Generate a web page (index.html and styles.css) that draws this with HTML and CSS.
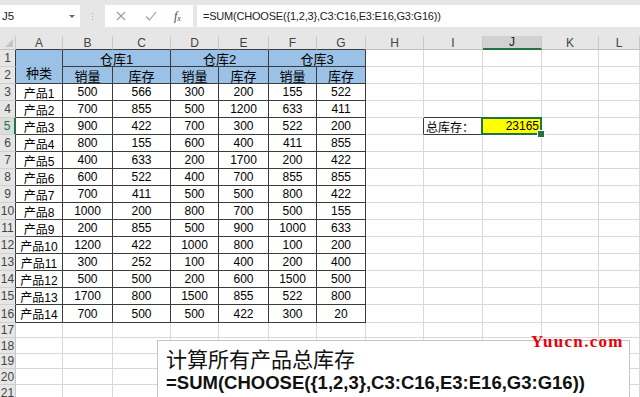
FILE: index.html
```html
<!DOCTYPE html>
<html lang="zh">
<head>
<meta charset="utf-8">
<title>SUM CHOOSE</title>
<link rel="stylesheet" href="styles.css">
</head>
<body>
<div class="app">
  <div class="topbar">
    <div class="namebox"><span>J5</span><span class="caret"></span></div>
    <div class="dots"><i></i><i></i><i></i></div>
    <div class="btns">
      <svg class="ic" width="12" height="12" viewBox="0 0 12 12"><path d="M2 2L10 10M10 2L2 10" stroke="#9a9a9a" stroke-width="1.1" fill="none"/></svg>
      <svg class="ic" width="14" height="12" viewBox="0 0 14 12"><path d="M2 6.5L5.5 10L12 2" stroke="#9a9a9a" stroke-width="1.1" fill="none"/></svg>
      <span class="fx">f<sub>x</sub></span>
    </div>
    <div class="formula">=SUM(CHOOSE({1,2,3},C3:C16,E3:E16,G3:G16))</div>
  </div>

  <div class="sheet">
    <div class="corner"><span class="tri"></span></div>
    <div class="ch tb">A</div><div class="ch tb">B</div><div class="ch tb">C</div><div class="ch tb">D</div><div class="ch tb">E</div><div class="ch tb">F</div><div class="ch tb">G</div><div class="ch">H</div><div class="ch">I</div><div class="ch act">J</div><div class="ch">K</div><div class="ch">L</div>

    <div class="rh tb">1</div><div class="c t h kind">种类</div><div class="c t h span2">仓库1</div><div class="c t h span2">仓库2</div><div class="c t h span2">仓库3</div><div class="c"></div><div class="c"></div><div class="c"></div><div class="c"></div><div class="c"></div>

    <div class="rh tb">2</div><div class="c t h">销量</div><div class="c t h">库存</div><div class="c t h">销量</div><div class="c t h">库存</div><div class="c t h">销量</div><div class="c t h">库存</div><div class="c"></div><div class="c"></div><div class="c"></div><div class="c"></div><div class="c"></div>

    <div class="rh tb">3</div><div class="c t">产品1</div><div class="c t">500</div><div class="c t">566</div><div class="c t">300</div><div class="c t">200</div><div class="c t">155</div><div class="c t">522</div><div class="c"></div><div class="c"></div><div class="c"></div><div class="c"></div><div class="c"></div>

    <div class="rh tb">4</div><div class="c t">产品2</div><div class="c t">700</div><div class="c t">855</div><div class="c t">500</div><div class="c t">1200</div><div class="c t">633</div><div class="c t">411</div><div class="c"></div><div class="c above"></div><div class="c"></div><div class="c"></div><div class="c"></div>

    <div class="rh tb act">5</div><div class="c t">产品3</div><div class="c t">900</div><div class="c t">422</div><div class="c t">700</div><div class="c t">300</div><div class="c t">522</div><div class="c t">200</div><div class="c leftof"></div><div class="c label">总库存：</div><div class="c sel">23165</div><div class="c"></div><div class="c"></div>

    <div class="rh tb">6</div><div class="c t">产品4</div><div class="c t">800</div><div class="c t">155</div><div class="c t">600</div><div class="c t">400</div><div class="c t">411</div><div class="c t">855</div><div class="c"></div><div class="c"></div><div class="c"></div><div class="c"></div><div class="c"></div>

    <div class="rh tb">7</div><div class="c t">产品5</div><div class="c t">400</div><div class="c t">633</div><div class="c t">200</div><div class="c t">1700</div><div class="c t">200</div><div class="c t">422</div><div class="c"></div><div class="c"></div><div class="c"></div><div class="c"></div><div class="c"></div>

    <div class="rh tb">8</div><div class="c t">产品6</div><div class="c t">600</div><div class="c t">522</div><div class="c t">400</div><div class="c t">700</div><div class="c t">855</div><div class="c t">855</div><div class="c"></div><div class="c"></div><div class="c"></div><div class="c"></div><div class="c"></div>

    <div class="rh tb">9</div><div class="c t">产品7</div><div class="c t">700</div><div class="c t">411</div><div class="c t">500</div><div class="c t">500</div><div class="c t">800</div><div class="c t">422</div><div class="c"></div><div class="c"></div><div class="c"></div><div class="c"></div><div class="c"></div>

    <div class="rh tb">10</div><div class="c t">产品8</div><div class="c t">1000</div><div class="c t">200</div><div class="c t">800</div><div class="c t">700</div><div class="c t">500</div><div class="c t">155</div><div class="c"></div><div class="c"></div><div class="c"></div><div class="c"></div><div class="c"></div>

    <div class="rh tb">11</div><div class="c t">产品9</div><div class="c t">200</div><div class="c t">855</div><div class="c t">500</div><div class="c t">900</div><div class="c t">1000</div><div class="c t">633</div><div class="c"></div><div class="c"></div><div class="c"></div><div class="c"></div><div class="c"></div>

    <div class="rh tb">12</div><div class="c t">产品10</div><div class="c t">1200</div><div class="c t">422</div><div class="c t">1000</div><div class="c t">800</div><div class="c t">100</div><div class="c t">200</div><div class="c"></div><div class="c"></div><div class="c"></div><div class="c"></div><div class="c"></div>

    <div class="rh tb">13</div><div class="c t">产品11</div><div class="c t">300</div><div class="c t">252</div><div class="c t">100</div><div class="c t">400</div><div class="c t">200</div><div class="c t">400</div><div class="c"></div><div class="c"></div><div class="c"></div><div class="c"></div><div class="c"></div>

    <div class="rh tb">14</div><div class="c t">产品12</div><div class="c t">500</div><div class="c t">500</div><div class="c t">200</div><div class="c t">600</div><div class="c t">1500</div><div class="c t">500</div><div class="c"></div><div class="c"></div><div class="c"></div><div class="c"></div><div class="c"></div>

    <div class="rh tb">15</div><div class="c t">产品13</div><div class="c t">1700</div><div class="c t">800</div><div class="c t">1500</div><div class="c t">855</div><div class="c t">522</div><div class="c t">800</div><div class="c"></div><div class="c"></div><div class="c"></div><div class="c"></div><div class="c"></div>

    <div class="rh tb">16</div><div class="c t">产品14</div><div class="c t">700</div><div class="c t">500</div><div class="c t">500</div><div class="c t">422</div><div class="c t">300</div><div class="c t">20</div><div class="c"></div><div class="c"></div><div class="c"></div><div class="c"></div><div class="c"></div>

    <div class="rh">17</div><div class="c"></div><div class="c"></div><div class="c"></div><div class="c"></div><div class="c"></div><div class="c"></div><div class="c"></div><div class="c"></div><div class="c"></div><div class="c"></div><div class="c"></div><div class="c"></div>
    <div class="rh">18</div><div class="c"></div><div class="c"></div><div class="c"></div><div class="c"></div><div class="c"></div><div class="c"></div><div class="c"></div><div class="c"></div><div class="c"></div><div class="c"></div><div class="c"></div><div class="c"></div>
    <div class="rh">19</div><div class="c"></div><div class="c"></div><div class="c"></div><div class="c"></div><div class="c"></div><div class="c"></div><div class="c"></div><div class="c"></div><div class="c"></div><div class="c"></div><div class="c"></div><div class="c"></div>
    <div class="rh">20</div><div class="c"></div><div class="c"></div><div class="c"></div><div class="c"></div><div class="c"></div><div class="c"></div><div class="c"></div><div class="c"></div><div class="c"></div><div class="c"></div><div class="c"></div><div class="c"></div>
    <div class="rh">21</div><div class="c"></div><div class="c"></div><div class="c"></div><div class="c"></div><div class="c"></div><div class="c"></div><div class="c"></div><div class="c"></div><div class="c"></div><div class="c"></div><div class="c"></div><div class="c"></div>
  </div>

  <div class="note">
    <div class="note-title">计算所有产品总库存</div>
    <div class="note-formula">=SUM(CHOOSE({1,2,3},C3:C16,E3:E16,G3:G16))</div>
  </div>
  <div class="mark">Yuucn.com</div>
</div>
</body>
</html>
```

FILE: styles.css
```css
* { box-sizing: border-box; }
html, body { margin: 0; padding: 0; background: #fff; }
body {
  font-family: "Liberation Sans", "Noto Sans CJK SC", sans-serif;
  color: #000;
  width: 640px;
  height: 397px;
  overflow: hidden;
}
.app { position: relative; width: 640px; height: 397px; overflow: hidden; }

/* formula bar */
.topbar {
  height: 36px;
  background: #e6e6e6;
  display: flex;
  align-items: flex-start;
  padding-top: 5px;
}
.namebox {
  width: 80px;
  height: 22px;
  background: #fff;
  display: flex;
  align-items: center;
  justify-content: space-between;
  padding: 0 5px 0 2px;
  font-size: 11.5px;
  color: #222;
}
.caret {
  width: 0; height: 0;
  border-left: 3px solid transparent;
  border-right: 3px solid transparent;
  border-top: 3px solid #666;
}
.dots {
  width: 25px;
  height: 22px;
  display: flex;
  flex-direction: column;
  align-items: center;
  justify-content: center;
  gap: 2px;
}
.dots i { width: 1px; height: 1px; background: #aaa; display: block; }
.btns {
  width: 88px;
  height: 22px;
  background: #fff;
  display: flex;
  align-items: center;
  padding-left: 10px;
  gap: 0;
}
.btns .ic { display: block; }
.btns .ic:first-child { margin-right: 17px; }
.btns .ic:nth-child(2) { margin-right: 16px; }
.fx {
  font-family: "Liberation Serif", serif;
  font-style: italic;
  font-size: 12px;
  color: #444;
}
.fx sub { font-size: 8px; vertical-align: -1px; }
.formula {
  margin-left: 4px;
  flex: 1;
  height: 22px;
  background: #fff;
  font-size: 11px;
  letter-spacing: -0.2px;
  color: #222;
  display: flex;
  align-items: center;
  padding-left: 6px;
}

/* grid */
.sheet {
  display: grid;
  grid-template-columns: 16px 47px 50px 58px 48px 50px 48px 49px 58px 59px 59px 57px 41px;
  grid-template-rows: 14px repeat(15, 17px) 18px 15px 16px 15px 16px 16px;
  font-size: 12px;
}
.corner {
  background: #e6e6e6;
  border-right: 1px solid #c8c8c8;
  border-bottom: 1px solid #bdbdbd;
  position: relative;
}
.tri {
  position: absolute;
  right: 2px; bottom: 2px;
  width: 0; height: 0;
  border-left: 8px solid transparent;
  border-bottom: 8px solid #c4c4c4;
}
.ch {
  background: #e6e6e6;
  border-right: 1px solid #c8c8c8;
  border-bottom: 1px solid #bdbdbd;
  color: #444;
  display: flex;
  align-items: center;
  justify-content: center;
  font-size: 12px;
}
.ch.tb { border-bottom-color: #3c3c3c; }
.ch.act { background: #d2d2d2; border-bottom: 2px solid #217346; color: #222; }
.rh {
  background: #e6e6e6;
  border-right: 1px solid #c8c8c8;
  border-bottom: 1px solid #d0d0d0;
  color: #444;
  display: flex;
  align-items: center;
  justify-content: center;
  font-size: 12px;
}
.rh.tb { border-right-color: #3c3c3c; }
.rh.act { border-right: 2px solid #217346; color: #217346; background: #dcdcdc; }
.c {
  border-right: 1px solid #d9d9d9;
  border-bottom: 1px solid #d9d9d9;
  display: flex;
  align-items: center;
  justify-content: center;
  white-space: nowrap;
  overflow: hidden;
}
.t { border-right-color: #3c3c3c; border-bottom-color: #3c3c3c; }
.h { background: #9bc2e6; font-size: 13px; }
.span2 { grid-column: span 2; }
.kind { grid-row: span 2; align-items: flex-end; padding-bottom: 1px; }
.above { border-bottom-color: #3c3c3c; }
.leftof { border-right-color: #3c3c3c; }
.label {
  border-right-color: #3c3c3c;
  border-bottom-color: #3c3c3c;
  justify-content: flex-start;
  padding-left: 2px;
  font-size: 12px;
}
.sel {
  position: relative;
  z-index: 2;
  overflow: visible;
  background: #ffff00;
  justify-content: flex-end;
  padding-right: 2px;
  font-size: 12px;
}
.sel::after {
  content: "";
  position: absolute;
  top: -1px; left: -2px; right: -1px; bottom: -1px;
  border: 2px solid #217346;
}
.sel::before {
  content: "";
  position: absolute;
  right: -4px; bottom: -4px;
  width: 6px; height: 6px;
  background: #217346;
  border: 1px solid #fff;
  z-index: 3;
}

/* overlay note */
.note {
  position: absolute;
  left: 157px;
  top: 340px;
  width: 473px;
  height: 70px;
  background: #fff;
  border: 1px solid #c4c4c4;
  padding: 4px 0 0 8px;
}
.note-title {
  font-family: "Noto Sans CJK SC", sans-serif;
  font-size: 21px;
  line-height: 26px;
  color: #111;
}
.note-formula {
  font-family: "Liberation Sans", sans-serif;
  font-weight: bold;
  font-size: 18.5px;
  line-height: 24px;
  color: #111;
}
.mark {
  position: absolute;
  left: 531px;
  top: 332px;
  font-family: "Liberation Serif", serif;
  font-weight: bold;
  font-size: 17px;
  letter-spacing: 1.3px;
  color: #e8000b;
}
```
